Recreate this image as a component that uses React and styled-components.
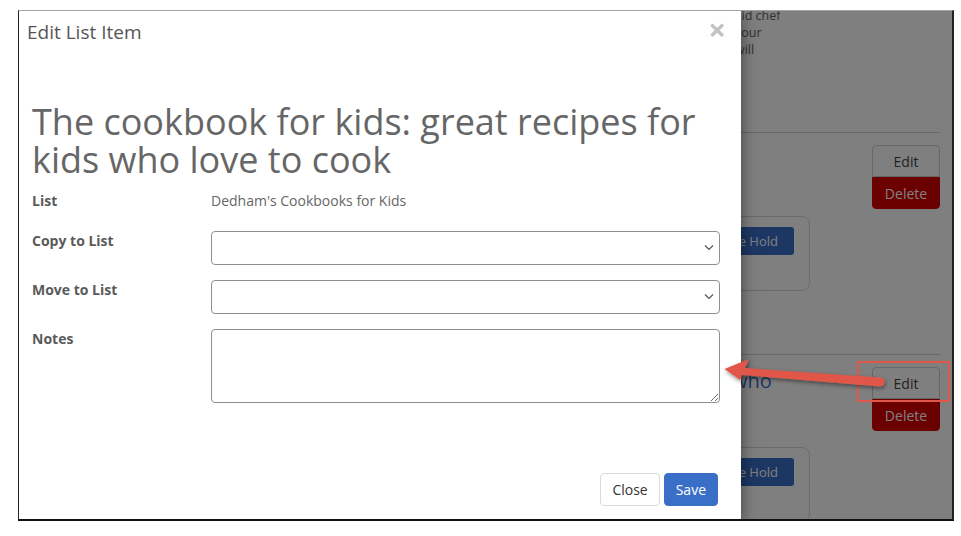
import React from "react";
import styled, { createGlobalStyle } from "styled-components";

const GlobalStyle = createGlobalStyle`
  html, body {
    margin: 0;
    padding: 0;
    background: #fff;
    font-family: "Open Sans", "Liberation Sans", sans-serif;
  }
  * {
    box-sizing: border-box;
  }
`;

const Frame = styled.div`
  position: relative;
  margin: 10px 0 0 18px;
  width: 936px;
  height: 511px;
  border-top: 1px solid #a3a3a3;
  border-left: 1px solid #222;
  border-right: 2px solid #222;
  border-bottom: 2px solid #111;
  overflow: hidden;
  display: grid;
  grid-template: minmax(0, 1fr) / minmax(0, 1fr);

  > * {
    grid-area: 1 / 1;
  }
`;

/* page behind the dialog */
const Page = styled.div`
  display: flex;
  flex-direction: column;
  padding: 0 12px 0 664px;
  overflow: hidden;
  color: #666;
`;

const Description = styled.p`
  margin: -4px 0 0 52px;
  font-size: 12.5px;
  line-height: 17px;
`;

const Divider = styled.hr`
  margin: ${(p) => p.$top || 0}px 0 0;
  border: 0;
  border-top: 1px solid #d2d2d2;
  height: 0;
  flex: none;
`;

const Item = styled.div`
  display: grid;
  grid-template-columns: 1fr 68px;
  padding: 12px 0 ${(p) => p.$bottom || 0}px;
`;

const ItemTitle = styled.div`
  padding-left: 49px;
  font-size: 20px;
  line-height: 28px;
  color: #3b6fc8;
  white-space: nowrap;
`;

const ActionGroup = styled.div`
  display: flex;
  flex-direction: column;
`;

const ActionButton = styled.button`
  height: 32px;
  font-family: inherit;
  font-size: 14px;
  border: 1px solid ${(p) => (p.$danger ? "#d40000" : "#cfcfcf")};
  background: ${(p) => (p.$danger ? "#d40000" : "#fff")};
  color: ${(p) => (p.$danger ? "#fff" : "#444")};
  border-radius: ${(p) => (p.$danger ? "0 0 4px 4px" : "4px 4px 0 0")};
  padding: 0;
`;

const HoldCard = styled.div`
  grid-column: 1;
  margin-top: ${(p) => p.$top}px;
  width: 127px;
  height: 75px;
  border: 1px solid #d4d4d4;
  border-radius: 8px;
  padding: 10px 15px 0 0;
  display: flex;
  justify-content: flex-end;
  align-items: flex-start;
`;

const HoldButton = styled.button`
  height: 28px;
  padding: 0 16px;
  border: 0;
  border-radius: 3px;
  background: #3b6fc8;
  color: #fff;
  font-family: inherit;
  font-size: 13px;
  white-space: nowrap;
`;

const Backdrop = styled.div`
  background: rgba(0, 0, 0, 0.5);
`;

/* dialog */
const Modal = styled.div`
  justify-self: start;
  width: 722px;
  background: #fff;
  box-shadow: 0 5px 15px rgba(0, 0, 0, 0.5);
  display: flex;
  flex-direction: column;
`;

const Header = styled.div`
  display: flex;
  justify-content: space-between;
  align-items: flex-start;
  padding: 9px 15px 0 8px;
`;

const HeaderTitle = styled.h4`
  margin: 0;
  font-size: 19px;
  line-height: 24px;
  font-weight: 400;
  color: #555;
`;

const CloseX = styled.span`
  font-size: 31px;
  font-weight: 700;
  line-height: 30px;
  color: #c2c2c2;
  margin-top: -6px;
`;

const Body = styled.div`
  padding: 0 21px 0 13px;
`;

const BookTitle = styled.h1`
  margin: 59px 0 12px;
  font-size: 36px;
  line-height: 38px;
  font-weight: 400;
  color: #666;
`;

const Form = styled.div`
  display: flex;
  flex-direction: column;
  gap: 15px;
`;

const Row = styled.div`
  display: grid;
  grid-template-columns: 179px 1fr;
  align-items: start;
  min-height: ${(p) => (p.$static ? "25px" : "0")};
`;

const Label = styled.label`
  font-size: 14px;
  line-height: 20px;
  font-weight: 700;
  color: #5a5a5a;
`;

const Static = styled.div`
  font-size: 14px;
  line-height: 20px;
  color: #666;
`;

const SelectWrap = styled.div`
  position: relative;
`;

const Select = styled.select`
  display: block;
  width: 100%;
  height: 34px;
  appearance: none;
  border: 1px solid #8f8f8f;
  border-radius: 4px;
  background: #fff;
  font-family: inherit;
  font-size: 14px;
`;

const Chevron = styled.svg`
  position: absolute;
  right: 6px;
  top: 13px;
  pointer-events: none;
`;

const Notes = styled.textarea`
  display: block;
  width: 100%;
  height: 74px;
  border: 1px solid #8f8f8f;
  border-radius: 4px;
  font-family: inherit;
  font-size: 14px;
`;

const Footer = styled.div`
  margin-top: auto;
  display: flex;
  justify-content: flex-end;
  gap: 4px;
  padding: 0 23px 13px 0;
`;

const FooterButton = styled.button`
  height: 33px;
  padding: 0 11px 1px;
  font-family: inherit;
  font-size: 14px;
  border-radius: 4px;
  border: 1px solid ${(p) => (p.$primary ? "#3a6fc7" : "#dadada")};
  background: ${(p) => (p.$primary ? "#3a6fc7" : "#fff")};
  color: ${(p) => (p.$primary ? "#fff" : "#333")};
`;

const Annotation = styled.svg`
  position: absolute;
  inset: 0;
  pointer-events: none;
`;

const DownChevron = () => (
  <Chevron width="10" height="7" viewBox="0 0 10 7">
    <path d="M1 1.5 L5 5.5 L9 1.5" fill="none" stroke="#555" strokeWidth="1.2" />
  </Chevron>
);

const ListItem = ({ title, cardTop, bottom }) => (
  <Item $bottom={bottom}>
    <ItemTitle>{title}</ItemTitle>
    <ActionGroup>
      <ActionButton>Edit</ActionButton>
      <ActionButton $danger>Delete</ActionButton>
    </ActionGroup>
    <HoldCard $top={cardTop}>
      <HoldButton>Place Hold</HoldButton>
    </HoldCard>
  </Item>
);

const App = () => {
  return (
    <>
      <GlobalStyle />
      <Frame>
        <Page>
          <Description>
            kid chef
            <br />
            your
            <br />
            will
          </Description>
          <Divider $top={74} />
          <ListItem title="" cardTop={7} bottom={63} />
          <Divider />
          <ListItem title="who" cardTop={16} />
        </Page>
        <Backdrop />
        <Modal>
          <Header>
            <HeaderTitle>Edit List Item</HeaderTitle>
            <CloseX>×</CloseX>
          </Header>
          <Body>
            <BookTitle>
              The cookbook for kids: great recipes for kids who love to cook
            </BookTitle>
            <Form>
              <Row $static>
                <Label>List</Label>
                <Static>Dedham's Cookbooks for Kids</Static>
              </Row>
              <Row>
                <Label>Copy to List</Label>
                <SelectWrap>
                  <Select />
                  <DownChevron />
                </SelectWrap>
              </Row>
              <Row>
                <Label>Move to List</Label>
                <SelectWrap>
                  <Select />
                  <DownChevron />
                </SelectWrap>
              </Row>
              <Row>
                <Label>Notes</Label>
                <Notes />
              </Row>
            </Form>
          </Body>
          <Footer>
            <FooterButton>Close</FooterButton>
            <FooterButton $primary>Save</FooterButton>
          </Footer>
        </Modal>
        <Annotation width="933" height="508" viewBox="0 0 933 508">
          <defs>
            <filter id="arrowShadow" x="-10%" y="-50%" width="120%" height="200%">
              <feDropShadow dx="1" dy="2" stdDeviation="2" floodColor="#000" floodOpacity="0.45" />
            </filter>
          </defs>
          <rect x="839" y="351" width="91" height="39" fill="none" stroke="#e0574a" strokeWidth="2" />
          <path
            filter="url(#arrowShadow)"
            fill="#e0574a"
            d="M705.5 358 L730 348 L726 357 L861 366.5 A4.5 4.5 0 0 1 861 375.5 L723 364 L721 369 Z"
          />
        </Annotation>
      </Frame>
    </>
  );
};

export default App;
